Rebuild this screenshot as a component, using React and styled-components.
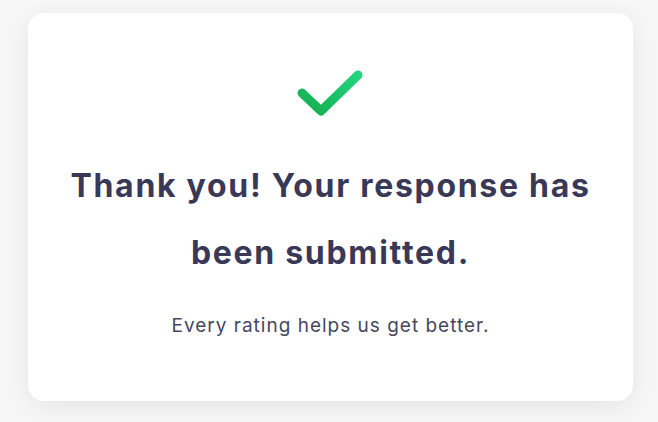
import React from "react";
import styled, { createGlobalStyle } from "styled-components";

const Global = createGlobalStyle`
  html, body { margin: 0; padding: 0; background: #f7f7f7; }
  body { font-family: Inter, "Noto Sans", sans-serif; }
`;

const Page = styled.div`
  width: 658px;
  height: 422px;
  box-sizing: border-box;
  padding: 13px 25px 21px 28px;
  display: flex;
`;

const Card = styled.div`
  flex: 1;
  background: #ffffff;
  border-radius: 16px;
  box-shadow: 0 6px 28px rgba(0, 0, 0, 0.08);
  display: flex;
  flex-direction: column;
  align-items: center;
  padding-top: 56px;
  box-sizing: border-box;
`;

const Heading = styled.h1`
  margin: 31px 0 0;
  font-size: 32px;
  font-weight: 700;
  line-height: 67px;
  letter-spacing: 1.7px;
  color: #393957;
  text-align: center;
  max-width: 560px;
`;

const Sub = styled.p`
  margin: 27px 0 0;
  font-size: 19px;
  line-height: 26px;
  color: #47475f;
  letter-spacing: 1px;
  text-align: center;
`;

function Check() {
  return (
    <svg width="70" height="52" viewBox="0 0 70 52">
      <defs>
        <linearGradient id="g" x1="0" y1="1" x2="1" y2="0">
          <stop offset="0" stopColor="#14ae4e" />
          <stop offset="1" stopColor="#22d47e" />
        </linearGradient>
      </defs>
      <path
        d="M6 24 L25 42 L62 6"
        fill="none"
        stroke="url(#g)"
        strokeWidth="9"
        strokeLinecap="round"
        strokeLinejoin="round"
      />
    </svg>
  );
}

export default function App() {
  return (
    <>
      <Global />
      <Page>
        <Card>
          <Check />
          <Heading>Thank you! Your response has been submitted.</Heading>
          <Sub>Every rating helps us get better.</Sub>
        </Card>
      </Page>
    </>
  );
}
